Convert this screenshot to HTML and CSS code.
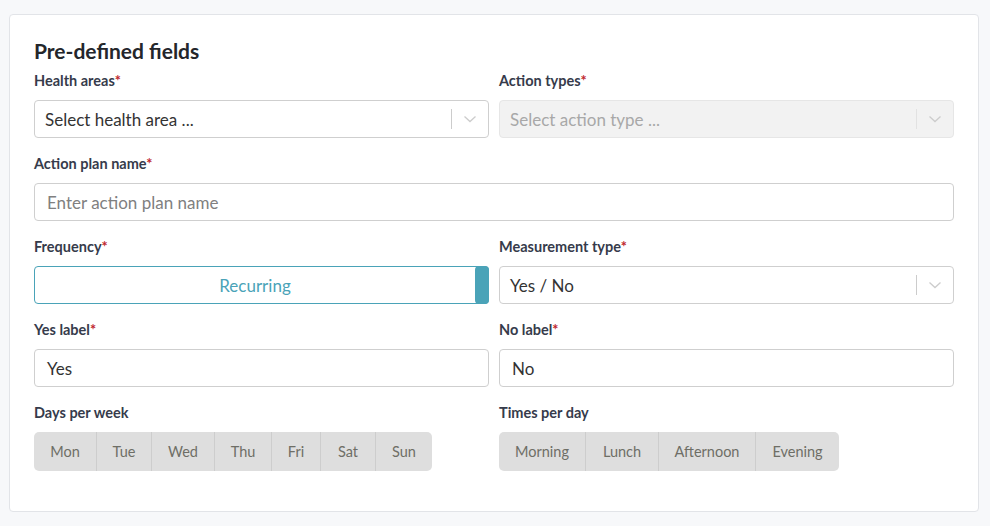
FILE: index.html
```html
<!DOCTYPE html>
<html>
<head>
<meta charset="utf-8">
<link rel="stylesheet" href="styles.css">
</head>
<body>
<div class="card">
  <h2 class="title">Pre-defined fields</h2>
  <div class="grid">
    <div class="field">
      <label class="label">Health areas<span class="req">*</span></label>
      <div class="select">
        <span class="value">Select health area ...</span>
        <span class="sep"></span>
        <span class="chev"><svg width="14" height="8" viewBox="0 0 14 8"><path d="M1.5 1.5 L7 6.5 L12.5 1.5" fill="none" stroke="#cccccc" stroke-width="1.3"/></svg></span>
      </div>
    </div>
    <div class="field">
      <label class="label">Action types<span class="req">*</span></label>
      <div class="select disabled">
        <span class="value">Select action type ...</span>
        <span class="sep"></span>
        <span class="chev"><svg width="14" height="8" viewBox="0 0 14 8"><path d="M1.5 1.5 L7 6.5 L12.5 1.5" fill="none" stroke="#cccccc" stroke-width="1.3"/></svg></span>
      </div>
    </div>
    <div class="field full">
      <label class="label">Action plan name<span class="req">*</span></label>
      <div class="input"><span class="placeholder">Enter action plan name</span></div>
    </div>
    <div class="field">
      <label class="label">Frequency<span class="req">*</span></label>
      <div class="toggle">
        <span class="toggle-text">Recurring</span>
        <span class="handle"></span>
      </div>
    </div>
    <div class="field">
      <label class="label">Measurement type<span class="req">*</span></label>
      <div class="select">
        <span class="value dark">Yes / No</span>
        <span class="sep"></span>
        <span class="chev"><svg width="14" height="8" viewBox="0 0 14 8"><path d="M1.5 1.5 L7 6.5 L12.5 1.5" fill="none" stroke="#cccccc" stroke-width="1.3"/></svg></span>
      </div>
    </div>
    <div class="field">
      <label class="label">Yes label<span class="req">*</span></label>
      <div class="input"><span class="value dark">Yes</span></div>
    </div>
    <div class="field">
      <label class="label">No label<span class="req">*</span></label>
      <div class="input"><span class="value dark">No</span></div>
    </div>
    <div class="field">
      <label class="label">Days per week</label>
      <div class="segments">
        <span class="seg w62">Mon</span><span class="seg w55">Tue</span><span class="seg w63">Wed</span><span class="seg w57">Thu</span><span class="seg w49">Fri</span><span class="seg w55">Sat</span><span class="seg w57">Sun</span>
      </div>
    </div>
    <div class="field">
      <label class="label">Times per day</label>
      <div class="segments">
        <span class="seg w86">Morning</span><span class="seg w73">Lunch</span><span class="seg w97">Afternoon</span><span class="seg w84">Evening</span>
      </div>
    </div>
  </div>
</div>
</body>
</html>
```

FILE: styles.css
```css
* { box-sizing: border-box; }
html, body { margin: 0; padding: 0; }
body {
  background: #f7f8fa;
  font-family: Lato, "Open Sans", sans-serif;
  padding: 14px 11px 14px 9px;
  width: 990px;
  height: 526px;
}
.card {
  background: #ffffff;
  border: 1px solid #e2e4e8;
  border-radius: 4px;
  padding: 24px 24px 40px 24px;
  height: 498px;
}
.title {
  margin: 0 0 10px 0;
  font-size: 21px;
  font-weight: 700;
  color: #24262b;
  line-height: 24px;
}
.grid {
  display: grid;
  grid-template-columns: 455px 455px;
  column-gap: 10px;
  row-gap: 18px;
}
.field { display: flex; flex-direction: column; }
.full { grid-column: 1 / 3; }
.label {
  font-size: 14.5px;
  font-weight: 700;
  color: #363b4b;
  line-height: 16px;
  height: 16px;
  margin-bottom: 11px;
}
.req { color: #c0262d; }
.select, .input {
  height: 38px;
  border: 1px solid #cfcfcf;
  border-radius: 4px;
  display: flex;
  align-items: center;
  background: #fff;
}
.select .value {
  flex: 1;
  padding-left: 10px;
  font-size: 17px;
  color: #333333;
}
.input { padding-left: 12px; font-size: 17px; }
.placeholder { color: #808080; }
.value.dark { color: #333333; }
.input .value { font-size: 17px; }
.select .sep {
  width: 1px;
  height: 20px;
  background: #cccccc;
}
.select .chev {
  width: 36px;
  display: flex;
  justify-content: center;
  align-items: center;
}
.select.disabled {
  background: #f2f2f2;
  border-color: #e6e6e6;
}
.select.disabled .value { color: #a8a8a8; }
.select.disabled .sep { background: #e2e2e2; }
.toggle {
  height: 38px;
  border: 1px solid #4aa3b8;
  border-radius: 4px;
  display: flex;
  align-items: stretch;
}
.toggle-text {
  flex: 1;
  display: flex;
  align-items: center;
  justify-content: center;
  color: #4aa3b8;
  font-size: 17px;
}
.handle {
  width: 14px;
  background: #4aa3b8;
  border-radius: 4px;
  margin: -1px -1px -1px 0;
}
.segments {
  display: flex;
  align-self: flex-start;
  height: 39px;
  background: #dedede;
  border-radius: 5px;
  overflow: hidden;
}
.seg {
  display: flex;
  align-items: center;
  justify-content: center;
  font-size: 14.5px;
  color: #6e6e66;
  border-left: 1px solid #cdcdcd;
}
.seg:first-child { border-left: none; }
.w62 { width: 62px; }
.w55 { width: 55px; }
.w63 { width: 63px; }
.w57 { width: 57px; }
.w49 { width: 49px; }
.w86 { width: 86px; }
.w73 { width: 73px; }
.w97 { width: 97px; }
.w84 { width: 84px; }
```
